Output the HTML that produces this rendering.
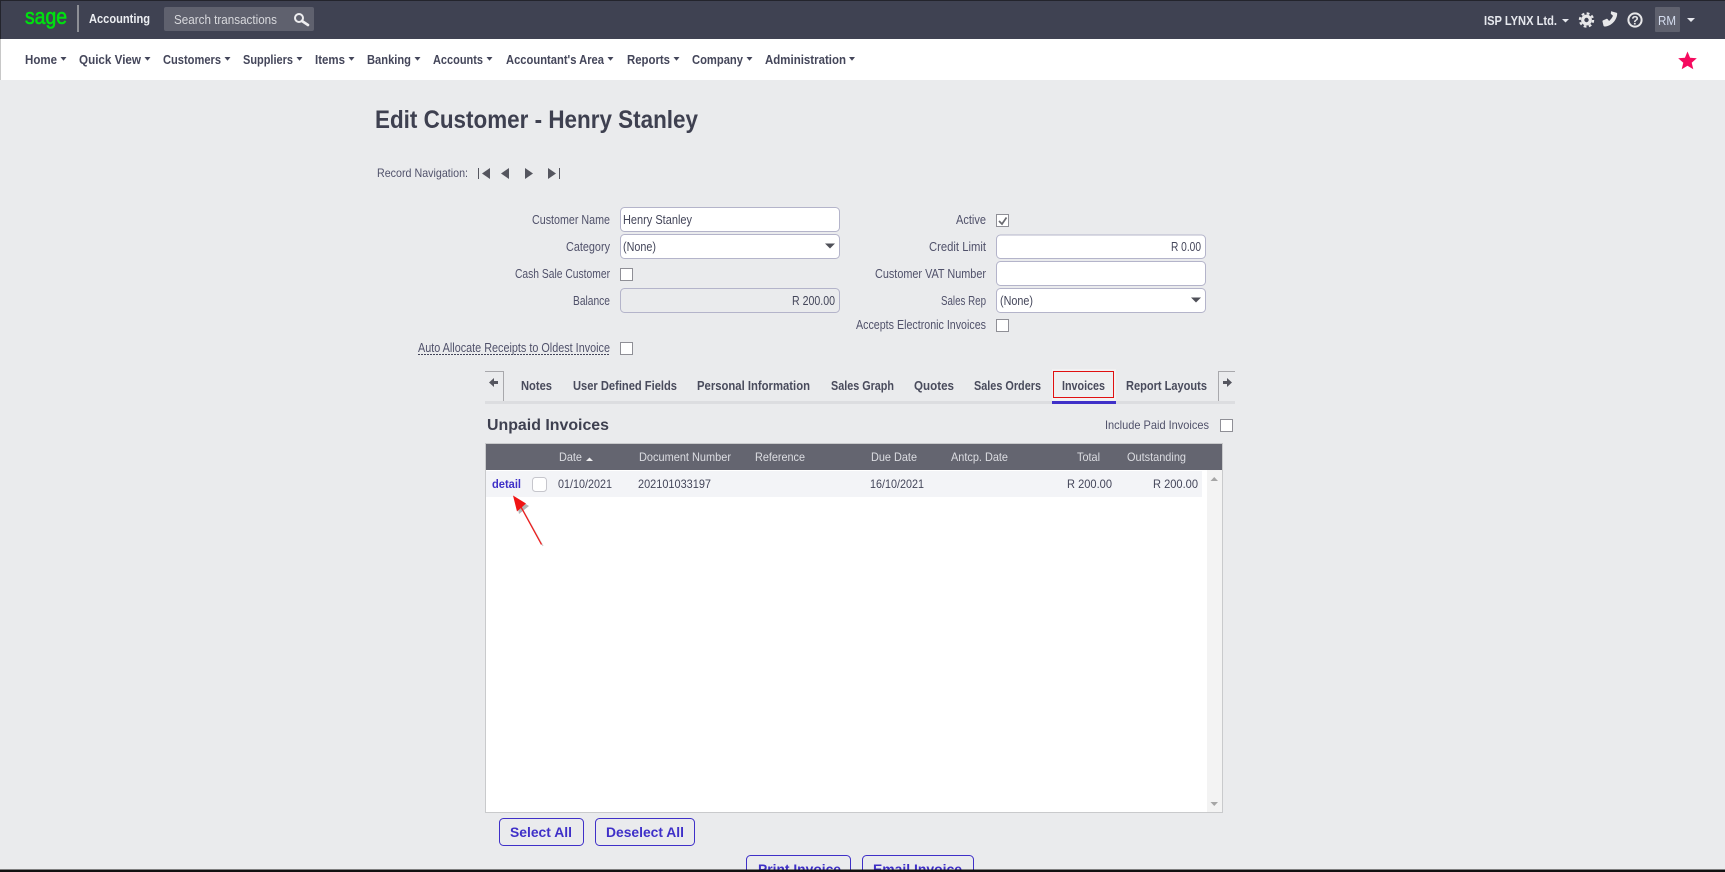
<!DOCTYPE html>
<html><head><meta charset="utf-8"><title>Edit Customer</title>
<style>
html,body{margin:0;padding:0;background:#eaebed;overflow:hidden}
svg{display:block}
text{font-family:"Liberation Sans",Arial,sans-serif;white-space:pre}
.n{font-size:13px;font-weight:bold;fill:#44465a}
.l{font-size:12.5px;fill:#50516a}
.t{font-size:13px;font-weight:bold;fill:#494b5c}
.h{font-size:12px;fill:#dcdde2}
.r{font-size:12px;fill:#44465a}
.v{font-size:12.5px;fill:#44465a}
.b{font-size:14px;font-weight:bold;fill:#3f30c8}
.i{fill:#fff;stroke:#b4b4ca;stroke-width:1}
.c{fill:#fff;stroke:#8f8f96;stroke-width:1}
.btn{fill:none;stroke:#3f30c8;stroke-width:1}
</style></head><body>
<svg width="1725" height="872" viewBox="0 0 1725 872" xmlns="http://www.w3.org/2000/svg">
<rect width="1725" height="872" fill="#eaebed"/>
<!-- top bar -->
<rect width="1725" height="39" fill="#3f4252"/>
<rect width="1725" height="1" fill="#23242c"/>
<rect x="0" y="0" width="1" height="39" fill="#23242c"/>
<text x="25" y="24" font-size="22" fill="#00e010" stroke="#00e010" stroke-width="0.6" textLength="42" lengthAdjust="spacingAndGlyphs">sage</text>
<rect x="77" y="5" width="2" height="27" fill="#8d8f96"/>
<text x="89" y="23" font-size="13" font-weight="bold" fill="#eceef2" textLength="61" lengthAdjust="spacingAndGlyphs">Accounting</text>
<rect x="164" y="7" width="150" height="24" rx="2" fill="#5f616e"/>
<text x="174" y="24" font-size="13" fill="#d8d9dd" textLength="103" lengthAdjust="spacingAndGlyphs">Search transactions</text>
<circle cx="299" cy="18" r="4" fill="none" stroke="#eeeef0" stroke-width="2"/>
<path d="M302 21L308 25" stroke="#eeeef0" stroke-width="2.6" stroke-linecap="round"/>

<text x="1484" y="25" font-size="13" font-weight="bold" fill="#e6e8ee" textLength="73" lengthAdjust="spacingAndGlyphs">ISP LYNX Ltd.</text>
<path d="M1562 19h7l-3.5 3.5z" fill="#e6e8ee"/>
<circle cx="1586.5" cy="20" r="3.8" fill="none" stroke="#e8e8ea" stroke-width="3.2"/>
<circle cx="1586.5" cy="20" r="6.6" fill="none" stroke="#e8e8ea" stroke-width="2.2" stroke-dasharray="2.8 2.38"/>
<path d="M1612 11.5l4.5 1.2c.5.2.7.5.7 1C1617 20 1611 26.5 1604.5 26.5c-.5 0-.8-.3-1-.7l-1-4.3c-.1-.5.1-.9.5-1.1l3.5-1.5c.4-.2.8-.1 1.1.2l1.5 1.9C1610.6 19.5 1612 18 1613 15.7l-1.9-1.6c-.3-.3-.4-.7-.3-1.1l.6-1.7c.1-.2.3-.3.6-.3z" fill="#e8e8ea"/>
<circle cx="1635" cy="20" r="6.6" fill="none" stroke="#e8e8ea" stroke-width="2"/>
<text x="1631.4" y="24.5" font-size="12" font-weight="bold" fill="#e8e8ea">?</text>
<rect x="1655" y="7" width="25" height="25" rx="1" fill="#5f616e"/>
<text x="1658" y="25" font-size="13" fill="#d5ddef" textLength="18" lengthAdjust="spacingAndGlyphs">RM</text>
<path d="M1687 18h8l-4 4z" fill="#e6e8ee"/>

<!-- nav -->
<rect x="0" y="39" width="1725" height="41" fill="#fff"/>
<rect x="0" y="39" width="1" height="41" fill="#c8c8c8"/>
<g class="navg">
<text class="n" x="25" y="64" textLength="32" lengthAdjust="spacingAndGlyphs">Home</text><path d="M60.5 57h6l-3 3.8z" fill="#44465a"/>
<text class="n" x="79" y="64" textLength="62" lengthAdjust="spacingAndGlyphs">Quick View</text><path d="M144.5 57h6l-3 3.8z" fill="#44465a"/>
<text class="n" x="163" y="64" textLength="58" lengthAdjust="spacingAndGlyphs">Customers</text><path d="M224.5 57h6l-3 3.8z" fill="#44465a"/>
<text class="n" x="243" y="64" textLength="50" lengthAdjust="spacingAndGlyphs">Suppliers</text><path d="M296.5 57h6l-3 3.8z" fill="#44465a"/>
<text class="n" x="315" y="64" textLength="30" lengthAdjust="spacingAndGlyphs">Items</text><path d="M348.5 57h6l-3 3.8z" fill="#44465a"/>
<text class="n" x="367" y="64" textLength="44" lengthAdjust="spacingAndGlyphs">Banking</text><path d="M414.5 57h6l-3 3.8z" fill="#44465a"/>
<text class="n" x="433" y="64" textLength="50" lengthAdjust="spacingAndGlyphs">Accounts</text><path d="M486.5 57h6l-3 3.8z" fill="#44465a"/>
<text class="n" x="506" y="64" textLength="98" lengthAdjust="spacingAndGlyphs">Accountant's Area</text><path d="M607.5 57h6l-3 3.8z" fill="#44465a"/>
<text class="n" x="627" y="64" textLength="43" lengthAdjust="spacingAndGlyphs">Reports</text><path d="M673.5 57h6l-3 3.8z" fill="#44465a"/>
<text class="n" x="692" y="64" textLength="51" lengthAdjust="spacingAndGlyphs">Company</text><path d="M746.5 57h6l-3 3.8z" fill="#44465a"/>
<text class="n" x="765" y="64" textLength="81" lengthAdjust="spacingAndGlyphs">Administration</text><path d="M849 57h6l-3 3.8z" fill="#44465a"/>
</g>
<path d="M1687.5 51.5l2.6 6.3 6.7.5-5.1 4.4 1.6 6.6-5.8-3.6-5.8 3.6 1.6-6.6-5.1-4.4 6.7-.5z" fill="#f50a5e"/>

<!-- title -->
<text x="375" y="128" font-size="25" font-weight="bold" fill="#3e4050" textLength="323" lengthAdjust="spacingAndGlyphs">Edit Customer - Henry Stanley</text>
<text x="377" y="177" font-size="12" fill="#50516a" textLength="91" lengthAdjust="spacingAndGlyphs">Record Navigation:</text>
<g fill="#55565f">
<rect x="478" y="168" width="1" height="11"/><path d="M490 168v11l-8-5.5z"/>
<path d="M509 168v11l-8-5.5z"/>
<path d="M525 168v11l8-5.5z"/>
<path d="M548 168v11l8-5.5z"/><rect x="559" y="168" width="1" height="11"/>
</g>

<!-- form left -->
<text class="l" x="532" y="224" textLength="78" lengthAdjust="spacingAndGlyphs">Customer Name</text>
<rect class="i" x="620.5" y="207.5" width="219" height="24" rx="4"/>
<text class="v" x="623" y="224" textLength="69" lengthAdjust="spacingAndGlyphs">Henry Stanley</text>
<text class="l" x="566" y="251" textLength="44" lengthAdjust="spacingAndGlyphs">Category</text>
<rect class="i" x="620.5" y="234.5" width="219" height="24" rx="4"/>
<text class="v" x="623" y="251" textLength="33" lengthAdjust="spacingAndGlyphs">(None)</text>
<path d="M825 243.5h10l-5 5z" fill="#4f5058"/>
<text class="l" x="515" y="278" textLength="95" lengthAdjust="spacingAndGlyphs">Cash Sale Customer</text>
<rect class="c" x="620.5" y="268.5" width="12" height="12"/>
<text class="l" x="573" y="305" textLength="37" lengthAdjust="spacingAndGlyphs">Balance</text>
<rect x="620.5" y="288.5" width="219" height="24" rx="4" fill="#eaebed" stroke="#b4b4ca"/>
<text class="v" x="792" y="305" textLength="43" lengthAdjust="spacingAndGlyphs">R 200.00</text>
<text class="l" x="418" y="352" textLength="192" lengthAdjust="spacingAndGlyphs">Auto Allocate Receipts to Oldest Invoice</text>
<path d="M418 354.5H610" stroke="#44465a" stroke-dasharray="2 1" fill="none"/>
<rect class="c" x="620.5" y="342.5" width="12" height="12"/>

<!-- form right -->
<text class="l" x="956" y="224" textLength="30" lengthAdjust="spacingAndGlyphs">Active</text>
<rect class="c" x="996.5" y="214.5" width="12" height="12"/>
<path d="M999 221l3 3 4.5-6.5" fill="none" stroke="#6a6a70" stroke-width="1.7"/>
<text class="l" x="929" y="251" textLength="57" lengthAdjust="spacingAndGlyphs">Credit Limit</text>
<rect class="i" x="996.5" y="235" width="209" height="23.5" rx="4"/>
<text class="v" x="1171" y="251" textLength="30" lengthAdjust="spacingAndGlyphs">R 0.00</text>
<text class="l" x="875" y="278" textLength="111" lengthAdjust="spacingAndGlyphs">Customer VAT Number</text>
<rect class="i" x="996.5" y="261.5" width="209" height="24" rx="4"/>
<text class="l" x="941" y="305" textLength="45" lengthAdjust="spacingAndGlyphs">Sales Rep</text>
<rect class="i" x="996.5" y="288.5" width="209" height="24" rx="4"/>
<text class="v" x="1000" y="305" textLength="33" lengthAdjust="spacingAndGlyphs">(None)</text>
<path d="M1191 297.5h10l-5 5z" fill="#4f5058"/>
<text class="l" x="856" y="329" textLength="130" lengthAdjust="spacingAndGlyphs">Accepts Electronic Invoices</text>
<rect class="c" x="996.5" y="319.5" width="12" height="12"/>

<!-- tabs -->
<rect x="485" y="401" width="750" height="3" fill="#dcdde0"/>
<path d="M485 371.5H503.5V401" fill="none" stroke="#a8a8ac"/>
<path d="M498 381h-4v-3l-5 4.5 5 4.5v-3h4z" fill="#55565f"/>
<text class="t" x="521" y="390" textLength="31" lengthAdjust="spacingAndGlyphs">Notes</text>
<text class="t" x="573" y="390" textLength="104" lengthAdjust="spacingAndGlyphs">User Defined Fields</text>
<text class="t" x="697" y="390" textLength="113" lengthAdjust="spacingAndGlyphs">Personal Information</text>
<text class="t" x="831" y="390" textLength="63" lengthAdjust="spacingAndGlyphs">Sales Graph</text>
<text class="t" x="914" y="390" textLength="40" lengthAdjust="spacingAndGlyphs">Quotes</text>
<text class="t" x="974" y="390" textLength="67" lengthAdjust="spacingAndGlyphs">Sales Orders</text>
<rect x="1052" y="369" width="64" height="32" fill="#f1f1f2"/>
<rect x="1053.5" y="371.5" width="60" height="26" fill="#eeeff0" stroke="#e01010"/>
<text class="t" x="1062" y="390" textLength="43" lengthAdjust="spacingAndGlyphs">Invoices</text>
<rect x="1052" y="401" width="64" height="3" fill="#3f30c8"/>
<text class="t" x="1126" y="390" textLength="81" lengthAdjust="spacingAndGlyphs">Report Layouts</text>
<path d="M1235 371.5H1218.5V401" fill="none" stroke="#a8a8ac"/>
<path d="M1223 381h4v-3l5 4.5-5 4.5v-3h-4z" fill="#55565f"/>

<!-- invoices -->
<text x="487" y="430" font-size="16" font-weight="bold" fill="#3e4050" textLength="122" lengthAdjust="spacingAndGlyphs">Unpaid Invoices</text>
<text x="1105" y="429" font-size="12" fill="#50516a" textLength="104" lengthAdjust="spacingAndGlyphs">Include Paid Invoices</text>
<rect class="c" x="1220.5" y="419.5" width="12" height="12"/>

<rect x="485.5" y="443.5" width="737" height="369" fill="#fff" stroke="#c9cacc"/>
<rect x="486" y="444" width="736" height="26" fill="#646570"/>
<text class="h" x="559" y="461" textLength="23" lengthAdjust="spacingAndGlyphs">Date</text>
<path d="M586 461h7l-3.5-3.5z" fill="#eeeeef"/>
<text class="h" x="639" y="461" textLength="92" lengthAdjust="spacingAndGlyphs">Document Number</text>
<text class="h" x="755" y="461" textLength="50" lengthAdjust="spacingAndGlyphs">Reference</text>
<text class="h" x="871" y="461" textLength="46" lengthAdjust="spacingAndGlyphs">Due Date</text>
<text class="h" x="951" y="461" textLength="57" lengthAdjust="spacingAndGlyphs">Antcp. Date</text>
<text class="h" x="1077" y="461" textLength="23" lengthAdjust="spacingAndGlyphs">Total</text>
<text class="h" x="1127" y="461" textLength="59" lengthAdjust="spacingAndGlyphs">Outstanding</text>

<rect x="486" y="471" width="716" height="26" fill="#f3f4f7"/>
<rect x="1207" y="470" width="15" height="342" fill="#f3f3f3"/>
<path d="M1210.5 481h7.5l-3.75-4z" fill="#a6a6a6"/>
<path d="M1210.5 802h7.5l-3.75 4z" fill="#a6a6a6"/>
<text x="492" y="488" font-size="12" font-weight="bold" fill="#3f30c8" textLength="29" lengthAdjust="spacingAndGlyphs">detail</text>
<rect x="532.5" y="477.5" width="14" height="14" rx="3" fill="#fff" stroke="#c6c6cc"/>
<text class="r" x="558" y="488" textLength="54" lengthAdjust="spacingAndGlyphs">01/10/2021</text>
<text class="r" x="638" y="488" textLength="73" lengthAdjust="spacingAndGlyphs">202101033197</text>
<text class="r" x="870" y="488" textLength="54" lengthAdjust="spacingAndGlyphs">16/10/2021</text>
<text class="r" x="1067" y="488" textLength="45" lengthAdjust="spacingAndGlyphs">R 200.00</text>
<text class="r" x="1153" y="488" textLength="45" lengthAdjust="spacingAndGlyphs">R 200.00</text>

<!-- red arrow -->
<path d="M543 546L523 510" stroke="#999" stroke-width="1.2" opacity=".5" fill="none"/>
<path d="M516 498L529 506L519 514z" fill="#777" opacity=".55"/>
<path d="M541.5 544.5L521 507" stroke="#ee1c1c" stroke-width="1.3" fill="none"/>
<path d="M513 495.5L526 503.5L517 511.5z" fill="#f01414"/>

<!-- buttons -->
<rect class="btn" x="499.5" y="818.5" width="84" height="27" rx="4"/>
<text class="b" x="510" y="837" textLength="62" lengthAdjust="spacingAndGlyphs">Select All</text>
<rect class="btn" x="595.5" y="818.5" width="99" height="27" rx="4"/>
<text class="b" x="606" y="837" textLength="78" lengthAdjust="spacingAndGlyphs">Deselect All</text>
<rect class="btn" x="746.5" y="855.5" width="104" height="27" rx="4"/>
<text class="b" x="758" y="874" textLength="83" lengthAdjust="spacingAndGlyphs">Print Invoice</text>
<rect class="btn" x="862.5" y="855.5" width="111" height="27" rx="4"/>
<text class="b" x="873" y="874" textLength="89" lengthAdjust="spacingAndGlyphs">Email Invoice</text>

<rect x="0" y="869.5" width="1725" height="2.5" fill="#111"/>
</svg>
</body></html>
